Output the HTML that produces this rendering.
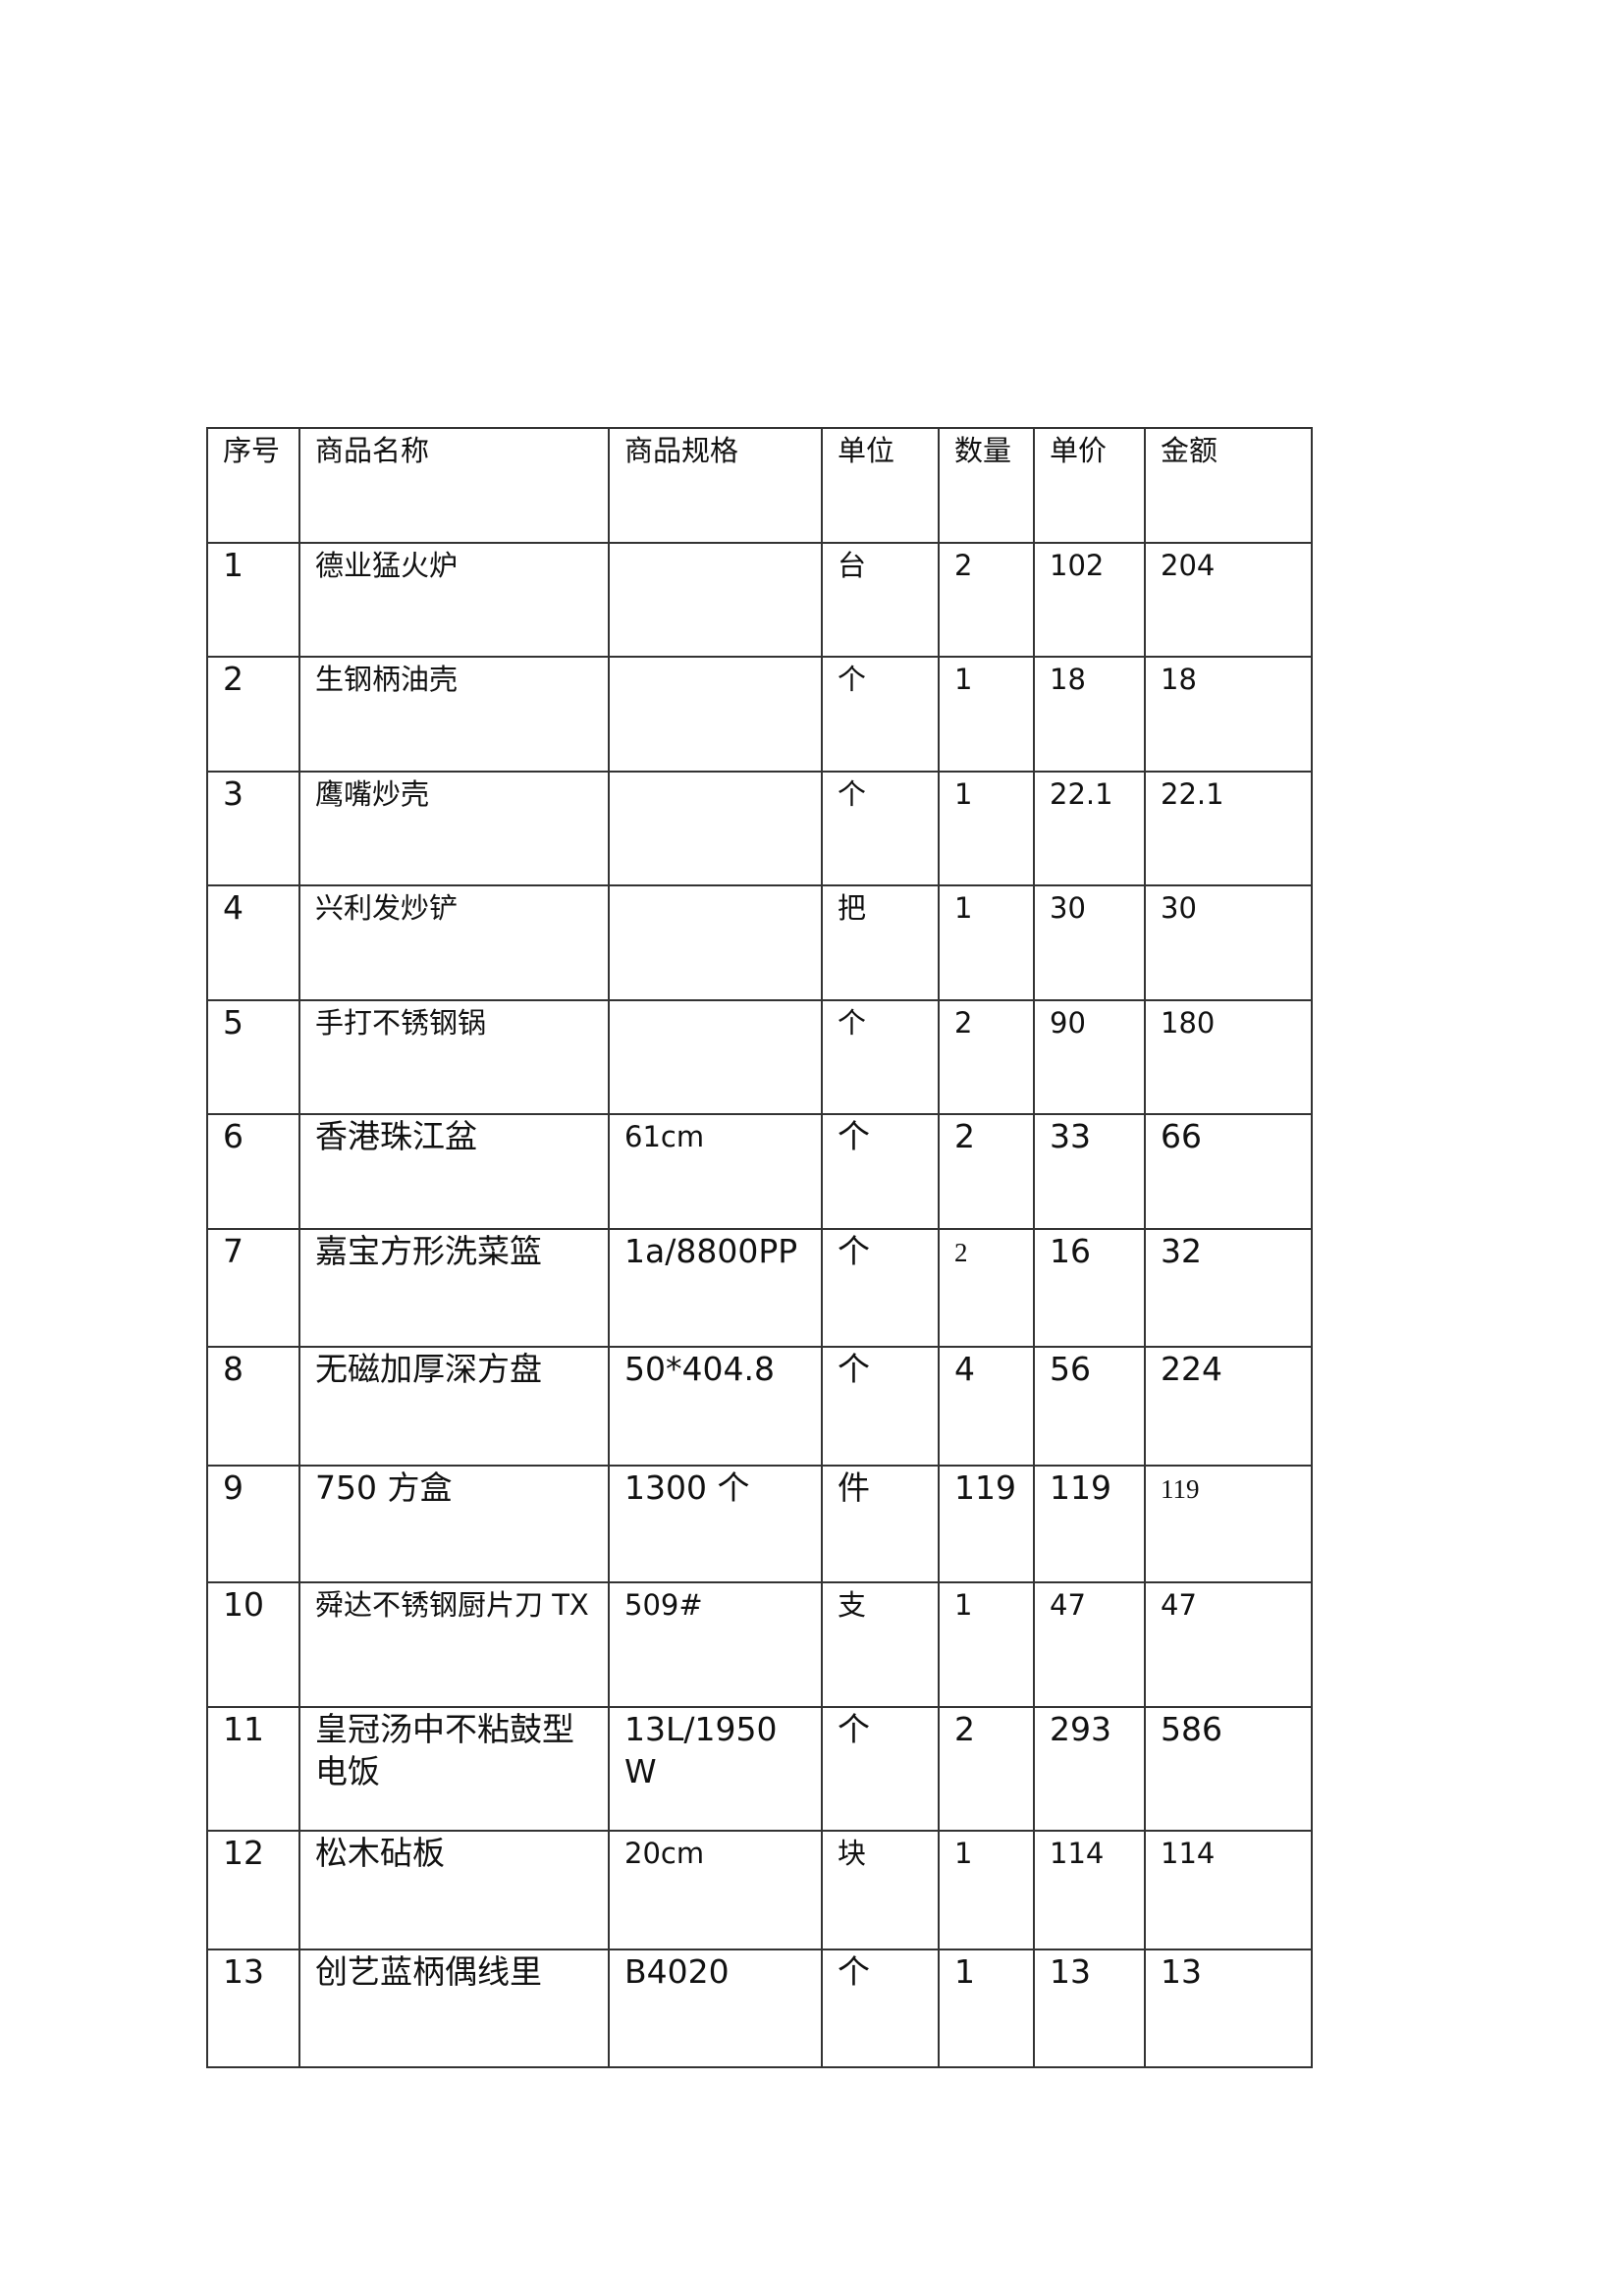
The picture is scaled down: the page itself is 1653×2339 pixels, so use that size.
<!DOCTYPE html>
<html><head><meta charset="utf-8">
<style>
html,body{margin:0;padding:0;background:#fff;}
body{width:1653px;height:2339px;position:relative;overflow:hidden;}
table{position:absolute;left:210px;top:435px;border-collapse:collapse;table-layout:fixed;
font-family:"DejaVu Sans","Noto Sans CJK SC",sans-serif;color:#111;}
td{border:2px solid #333;vertical-align:top;padding:4px 4px 0 15px;font-size:29px;line-height:1.3;box-sizing:border-box;overflow:hidden;}
td.b{font-size:33px;padding-top:1px;}
.s{font-family:"Liberation Serif",serif;font-size:27px;}
</style></head><body>
<table>
<colgroup><col style="width:94px"><col style="width:315px"><col style="width:217px"><col style="width:119px"><col style="width:97px"><col style="width:113px"><col style="width:170px"></colgroup>
<tr style="height:117px"><td>序号</td><td>商品名称</td><td>商品规格</td><td>单位</td><td>数量</td><td>单价</td><td>金额</td></tr>
<tr style="height:116px"><td class="b">1</td><td>德业猛火炉</td><td></td><td>台</td><td>2</td><td>102</td><td>204</td></tr>
<tr style="height:117px"><td class="b">2</td><td>生钢柄油壳</td><td></td><td>个</td><td>1</td><td>18</td><td>18</td></tr>
<tr style="height:116px"><td class="b">3</td><td>鹰嘴炒壳</td><td></td><td>个</td><td>1</td><td>22.1</td><td>22.1</td></tr>
<tr style="height:117px"><td class="b">4</td><td>兴利发炒铲</td><td></td><td>把</td><td>1</td><td>30</td><td>30</td></tr>
<tr style="height:116px"><td class="b">5</td><td>手打不锈钢锅</td><td></td><td>个</td><td>2</td><td>90</td><td>180</td></tr>
<tr style="height:117px"><td class="b">6</td><td class="b">香港珠江盆</td><td>61cm</td><td class="b">个</td><td class="b">2</td><td class="b">33</td><td class="b">66</td></tr>
<tr style="height:120px"><td class="b">7</td><td class="b">嘉宝方形洗菜篮</td><td class="b">1a/8800PP</td><td class="b">个</td><td><span class="s">2</span></td><td class="b">16</td><td class="b">32</td></tr>
<tr style="height:121px"><td class="b">8</td><td class="b">无磁加厚深方盘</td><td class="b">50*404.8</td><td class="b">个</td><td class="b">4</td><td class="b">56</td><td class="b">224</td></tr>
<tr style="height:119px"><td class="b">9</td><td class="b">750 方盒</td><td class="b">1300 个</td><td class="b">件</td><td class="b">119</td><td class="b">119</td><td><span class="s">119</span></td></tr>
<tr style="height:127px"><td class="b">10</td><td>舜达不锈钢厨片刀 TX</td><td>509#</td><td>支</td><td>1</td><td>47</td><td>47</td></tr>
<tr style="height:126px"><td class="b">11</td><td class="b">皇冠汤中不粘鼓型<br>电饭</td><td class="b">13L/1950<br>W</td><td class="b">个</td><td class="b">2</td><td class="b">293</td><td class="b">586</td></tr>
<tr style="height:121px"><td class="b">12</td><td class="b">松木砧板</td><td>20cm</td><td>块</td><td>1</td><td>114</td><td>114</td></tr>
<tr style="height:120px"><td class="b">13</td><td class="b">创艺蓝柄偶线里</td><td class="b">B4020</td><td class="b">个</td><td class="b">1</td><td class="b">13</td><td class="b">13</td></tr>
</table>
</body></html>
